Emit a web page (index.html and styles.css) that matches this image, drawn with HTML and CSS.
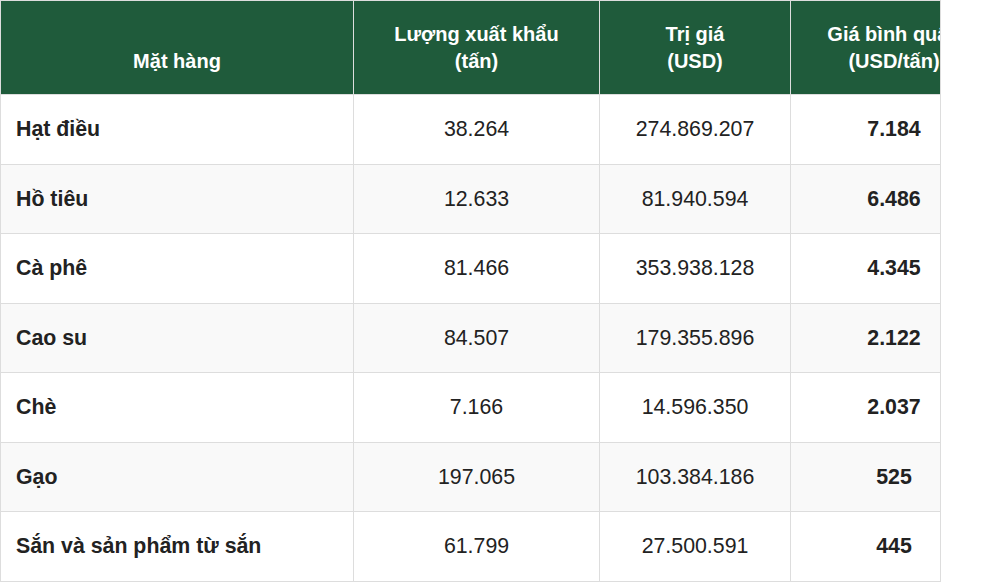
FILE: index.html
```html
<!DOCTYPE html>
<html lang="vi">
<head>
<meta charset="utf-8">
<title>Xuất khẩu nông sản</title>
<link rel="stylesheet" href="styles.css">
</head>
<body>
<div class="wrap">
  <table class="data">
    <colgroup>
      <col class="c1"><col class="c2"><col class="c3"><col class="c4">
    </colgroup>
    <thead>
      <tr>
        <th>Mặt hàng</th>
        <th>Lượng xuất khẩu<br>(tấn)</th>
        <th>Trị giá<br>(USD)</th>
        <th>Giá bình quân<br>(USD/tấn)</th>
      </tr>
    </thead>
    <tbody>
      <tr><td class="name">Hạt điều</td><td>38.264</td><td>274.869.207</td><td class="avg">7.184</td></tr>
      <tr><td class="name">Hồ tiêu</td><td>12.633</td><td>81.940.594</td><td class="avg">6.486</td></tr>
      <tr><td class="name">Cà phê</td><td>81.466</td><td>353.938.128</td><td class="avg">4.345</td></tr>
      <tr><td class="name">Cao su</td><td>84.507</td><td>179.355.896</td><td class="avg">2.122</td></tr>
      <tr><td class="name">Chè</td><td>7.166</td><td>14.596.350</td><td class="avg">2.037</td></tr>
      <tr><td class="name">Gạo</td><td>197.065</td><td>103.384.186</td><td class="avg">525</td></tr>
      <tr><td class="name">Sắn và sản phẩm từ sắn</td><td>61.799</td><td>27.500.591</td><td class="avg">445</td></tr>
    </tbody>
  </table>
</div>
</body>
</html>
```
FILE: styles.css
```css
html, body {
  margin: 0;
  padding: 0;
  background: #ffffff;
}
body {
  font-family: "Liberation Sans", Arial, sans-serif;
  color: #222222;
}
.wrap {
  width: 940px;
  overflow: hidden;
  border-right: 1px solid #dddddd;
}
.data {
  table-layout: fixed;
  width: 997px;
  border-collapse: separate;
  border-spacing: 0;
  border-left: 1px solid #dddddd;
  border-top: 1px solid #dddddd;
}
.c1 { width: 353px; }
.c2 { width: 246px; }
.c3 { width: 191px; }
.c4 { width: 207px; }
.data th,
.data td {
  border-right: 1px solid #dddddd;
  border-bottom: 1px solid #dddddd;
  text-align: center;
}
.data th {
  background: #1f5b3b;
  color: #ffffff;
  font-weight: bold;
  font-size: 20px;
  line-height: 26.5px;
  padding: 20px 16px;
  vertical-align: bottom;
}
.data td {
  font-size: 21.33px;
  line-height: 28.5px;
  padding: 20px 16px;
  vertical-align: middle;
}
.data tbody tr:nth-child(even) td {
  background: #f9f9f9;
}
.data td.name {
  text-align: left;
  font-weight: bold;
  padding-left: 15px;
}
.data td.avg {
  font-weight: bold;
}
```
